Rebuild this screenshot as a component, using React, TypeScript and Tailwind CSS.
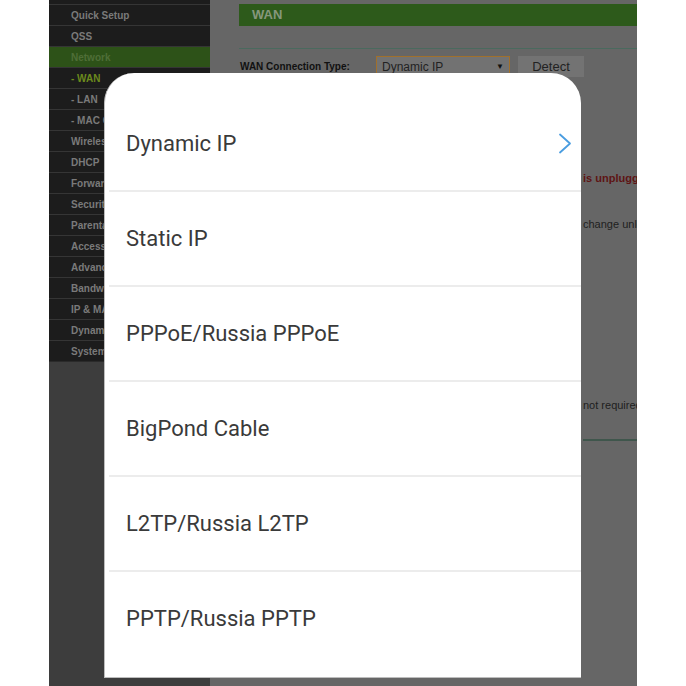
import React from "react";

const menu = [
  "Quick Setup",
  "QSS",
  "Network",
  "- WAN",
  "- LAN",
  "- MAC Clone",
  "Wireless",
  "DHCP",
  "Forwarding",
  "Security",
  "Parental Control",
  "Access Control",
  "Advanced Routing",
  "Bandwidth Control",
  "IP & MAC Binding",
  "Dynamic DNS",
  "System Tools",
];

const options = [
  "Dynamic IP",
  "Static IP",
  "PPPoE/Russia PPPoE",
  "BigPond Cable",
  "L2TP/Russia L2TP",
  "PPTP/Russia PPTP",
];

export default function App() {
  return (
    <div className="w-[686px] h-[686px] bg-white flex overflow-hidden relative">
      <div className="w-[49px] shrink-0" />
      <div className="w-[588px] shrink-0 flex h-full" style={{ fontFamily: "'Liberation Sans', Arial, sans-serif" }}>
        {/* sidebar */}
        <div className="w-[161px] shrink-0 bg-[#3d3d3d] flex flex-col">
          <div className="h-[4px] bg-[#1c1c1c]" />
          {menu.map((m) => {
            const isNet = m === "Network";
            const isWan = m === "- WAN";
            return (
              <div
                key={m}
                className={`h-[21px] border-t border-[#353535] flex items-center pl-[22px] text-[10px] font-bold whitespace-nowrap overflow-hidden ${
                  isNet ? "bg-[#2d5218] text-[#4f6e37]" : "bg-[#1c1c1c] " + (isWan ? "text-[#6b8a1c]" : "text-[#7a7a7a]")
                }`}
              >
                {m}
              </div>
            );
          })}
          <div className="border-t border-[#2a2a2a]" />
        </div>
        {/* main */}
        <div className="flex-1 bg-[#666666] flex flex-col pt-[4px] pl-[29px] overflow-hidden">
          <div className="h-[22px] bg-[#2d5a1b] flex items-center pl-[13px] text-[13px] font-bold text-[#86977c]">
            WAN
          </div>
          <div className="mt-[22px] h-[1px] bg-[#4a6a5e]" />
          <div className="mt-[7px] flex items-center h-[21px] whitespace-nowrap">
            <div className="w-[137px] text-[10px] font-bold text-[#111] pl-[1px]">WAN Connection Type:</div>
            <div className="w-[134px] h-[21px] border border-[#a0702c] bg-[#727272] flex items-center justify-between px-[5px] text-[12px] text-[#222]">
              <span>Dynamic IP</span>
              <span className="text-[8px] text-[#111]">▼</span>
            </div>
            <div className="ml-[8px] w-[66px] h-[21px] bg-[#737373] flex items-center justify-center text-[13px] text-[#222]">
              Detect
            </div>
          </div>
          <div className="pl-[344px] whitespace-nowrap">
            <div className="mt-[93px] text-[11px] font-bold text-[#5e1414]">is unplugged</div>
            <div className="mt-[29px] text-[11px] text-[#1e1e1e]">change unless</div>
            <div className="mt-[165px] text-[11px] text-[#1e1e1e]">not required</div>
            <div className="mt-[25px] h-[2px] bg-[#3f564c]" />
          </div>
        </div>
      </div>
      <div className="w-[49px] shrink-0" />

      {/* modal */}
      <div
        className="absolute left-[104px] top-[73px] w-[477px] h-[605px] bg-white rounded-t-[30px] border-b border-l border-[#bdbdbd] pt-[24px] flex flex-col"
        style={{ fontFamily: "Roboto, 'Noto Sans', sans-serif" }}
      >
        {options.map((o, i) => (
          <div key={o} className="flex flex-col">
            <div className="h-[93px] flex items-center justify-between pl-[21px] pr-[9px] text-[22px] text-[#3a3a3a]">
              <span>{o}</span>
              {i === 0 && (
                <svg width="14" height="21" viewBox="0 0 14 21" fill="none">
                  <polyline points="2,1.5 12,10.5 2,19.5" stroke="#4a9de0" strokeWidth="1.8" strokeLinecap="round" strokeLinejoin="round" />
                </svg>
              )}
            </div>
            {i < options.length - 1 ? <div className="ml-[4px] h-[2px] bg-[#ececec]" /> : null}
          </div>
        ))}
      </div>
    </div>
  );
}
